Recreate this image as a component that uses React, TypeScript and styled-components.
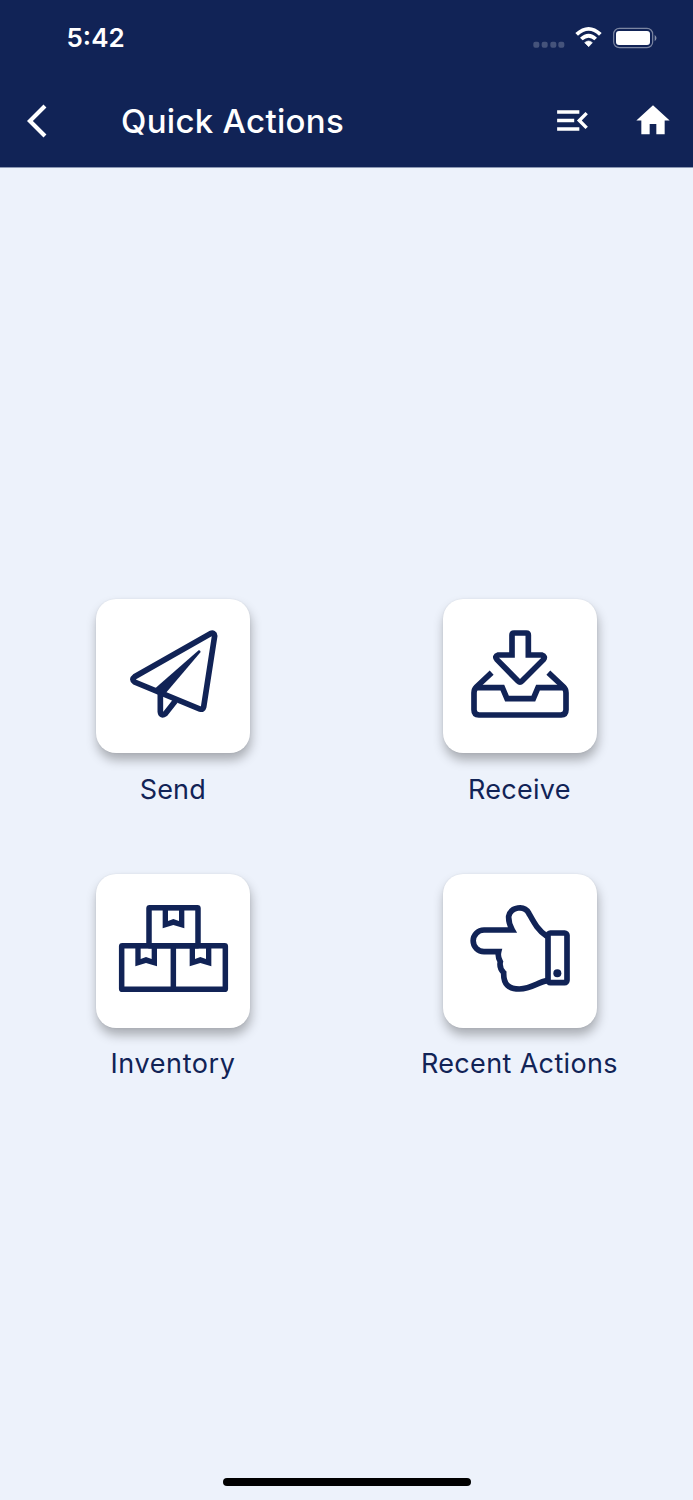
import React from "react";
import styled, { createGlobalStyle } from "styled-components";

const navy = "#112356";

const GlobalStyle = createGlobalStyle`
  * { box-sizing: border-box; }
  body { margin: 0; background: #edf2fb; }
`;

const Screen = styled.div`
  display: flex;
  flex-direction: column;
  height: 1500px;
  width: 693px;
  background: #edf2fb;
  color: ${navy};
  font-family: Inter, "Liberation Sans", sans-serif;
`;

const Header = styled.header`
  height: 168px;
  flex: none;
  background: ${navy};
  border-bottom: 1px solid #8c98b4;
  color: #fff;
`;

const StatusBar = styled.div`
  height: 76px;
  display: flex;
  align-items: center;
  justify-content: space-between;
  padding: 0 35px 0 66.5px;
`;

const Clock = styled.span`
  font-size: 26px;
  font-weight: 600;
  line-height: 32px;
  letter-spacing: 0;
`;

const StatusIcons = styled.div`
  display: flex;
  align-items: center;
`;

const Toolbar = styled.div`
  height: 89px;
  display: flex;
  align-items: center;
  padding: 0 20.2px 0 27px;
`;

const Title = styled.h1`
  flex: 1;
  margin: 0 0 0 54px;
  padding-top: 1px;
  font-size: 33px;
  font-weight: 500;
  line-height: 40px;
  letter-spacing: 0.3px;
  white-space: nowrap;
`;

const Glyph = styled.svg<{ $gap?: number }>`
  display: block;
  flex: none;
  fill: currentColor;
  margin-left: ${(p) => p.$gap ?? 0}px;
`;

const Grid = styled.main`
  flex: 1;
  display: grid;
  grid-template-columns: 1fr 1fr;
  grid-auto-rows: 274.5px;
  padding-top: 431.3px;
`;

const Action = styled.div`
  display: flex;
  flex-direction: column;
  align-items: center;
`;

const Card = styled.button`
  display: block;
  width: 154px;
  height: 154px;
  padding: 0;
  border: 0;
  border-radius: 20px;
  background: #fff;
  color: ${navy};
  box-shadow: 1px 7px 11px rgba(0, 0, 0, 0.29), 0 0 2px rgba(0, 0, 0, 0.08);
`;

const Label = styled.span<{ $spacing: number }>`
  margin-top: 19.5px;
  margin-right: ${(p) => 1 - p.$spacing}px;
  font-size: 27px;
  font-weight: 400;
  line-height: 34px;
  letter-spacing: ${(p) => p.$spacing}px;
  white-space: nowrap;
`;

const Footer = styled.footer`
  display: flex;
  justify-content: center;
  height: 22.2px;
`;

const HomeIndicator = styled.div`
  width: 248px;
  height: 8.6px;
  border-radius: 5px;
  background: #000;
`;

const SendIcon = () => (
  <svg width="154" height="154" viewBox="33 27 462 462" fill="none" stroke="currentColor" strokeWidth="17">
    <path d="M376 131 L149 260 Q138 268 149 276 L345 357 Q354 360 356 351 L389 138 Q388 126 376 131Z" />
    <path d="M226 306 V365 Q228 380 241 371 L271 333" />
    <path d="M341 181 L209 296 L238 314 L347 186 Q346 180 341 181Z" fill="currentColor" stroke="none" />
  </svg>
);

const ReceiveIcon = () => (
  <svg width="154" height="154" viewBox="39 27 462 462" fill="none" stroke="currentColor" strokeWidth="17">
    <path d="M246 195 V135 Q246 129 252 129 H289 Q295 129 295 135 V195 H335 Q348 199 340 209 L276 273 Q270 279 264 273 L201 209 Q192 199 205 195Z" />
    <path d="M185 248 L139 291 Q132 298 132 308 V359 Q132 374 147 375 H393 Q408 374 408 359 V308 Q408 298 401 291 L355 248" />
    <path d="M138 293 H217 L231 326 H310 L324 293 H402" />
  </svg>
);

const InventoryIcon = () => {
  const ribbon =
    "M234 130 V190 L266 180 L299 190 V130Z M250 136 V168 L266 162 L283 168 V136Z";
  return (
    <svg width="154" height="154" viewBox="34 27 462 462" fill="none" stroke="currentColor" strokeWidth="16.5">
      <rect x="193" y="128" width="147" height="114" rx="2" />
      <rect x="111" y="242" width="311" height="131" rx="2" />
      <path d="M266 242 V373" />
      <g fill="currentColor" fillRule="evenodd" stroke="none">
        <path d={ribbon} />
        <path d={ribbon} transform="translate(-82 114)" />
        <path d={ribbon} transform="translate(81 114)" />
      </g>
    </svg>
  );
};

const PointIcon = () => (
  <svg width="154" height="154" viewBox="99 27 462 462" fill="none" stroke="currentColor" strokeWidth="17">
    <rect x="414" y="204" width="57" height="149" rx="7" />
    <path d="M411 214 C382 195 370 169 356 144 C343 120 303 125 296 154 C295 174 301 184 307 195 H222 A32.5 32.5 0 0 0 222 260 H266 C263 272 266 282 271 290 C268 304 273 315 281 323 C280 358 296 372 328 372 C366 371 382 352 411 347" />
    <circle cx="442" cy="325" r="12" fill="currentColor" stroke="none" />
  </svg>
);

const actions = [
  { label: "Send", icon: <SendIcon />, spacing: 0.1 },
  { label: "Receive", icon: <ReceiveIcon />, spacing: 0.25 },
  { label: "Inventory", icon: <InventoryIcon />, spacing: 0.6 },
  { label: "Recent Actions", icon: <PointIcon />, spacing: 0.35 },
];

export default function App() {
  return (
    <>
      <GlobalStyle />
      <Screen>
        <Header>
          <StatusBar>
            <Clock>5:42</Clock>
            <StatusIcons>
              <Glyph width="32" height="22" viewBox="0 0 96 66" opacity="0.22">
                {[1, 26, 52, 76].map((x) => (
                  <rect key={x} x={x} y="44" width="18" height="18" rx="6" />
                ))}
              </Glyph>
              <Glyph $gap={10} width="27" height="22" viewBox="0 0 81 66">
                <path d="M1 18 Q41 -18 80 18 L72 26 Q41 -3 9 26Z" />
                <path d="M15 32 Q41 8 66 32 L58 40 Q41 25 23 40Z" />
                <path d="M29 47 Q41 37 52 47 L41 59Z" stroke="currentColor" strokeWidth="2" strokeLinejoin="round" />
              </Glyph>
              <Glyph $gap={10.7} width="45" height="22" viewBox="0 0 135 66">
                <rect x="2" y="4" width="117" height="58" rx="17" fill="none" stroke="#fff" strokeWidth="3.5" opacity="0.45" />
                <rect x="9" y="12" width="102" height="42" rx="9" />
                <path d="M125 23 Q136 33 125 43Z" opacity="0.5" />
              </Glyph>
            </StatusIcons>
          </StatusBar>
          <Toolbar>
            <Glyph width="40" height="40" viewBox="0 0 24 24">
              <path d="M11.67 3.87L9.9 2.1 0 12l9.9 9.9 1.77-1.77L3.54 12z" />
            </Glyph>
            <Title>Quick Actions</Title>
            <Glyph width="41" height="41" viewBox="0 0 24 24">
              <path d="M3 18h13v-2H3v2zM3 6v2h13V6H3zm0 7h10v-2H3v2zm18 2.59L17.42 12 21 8.41 19.59 7l-5 5 5 5L21 15.59z" />
            </Glyph>
            <Glyph $gap={39.6} width="40" height="41" viewBox="0 0 24 24" preserveAspectRatio="none">
              <path d="M10 20v-6h4v6h5v-8h3L12 3 2 12h3v8z" />
            </Glyph>
          </Toolbar>
        </Header>
        <Grid>
          {actions.map((a) => (
            <Action key={a.label}>
              <Card aria-label={a.label}>{a.icon}</Card>
              <Label $spacing={a.spacing}>{a.label}</Label>
            </Action>
          ))}
        </Grid>
        <Footer>
          <HomeIndicator />
        </Footer>
      </Screen>
    </>
  );
}
